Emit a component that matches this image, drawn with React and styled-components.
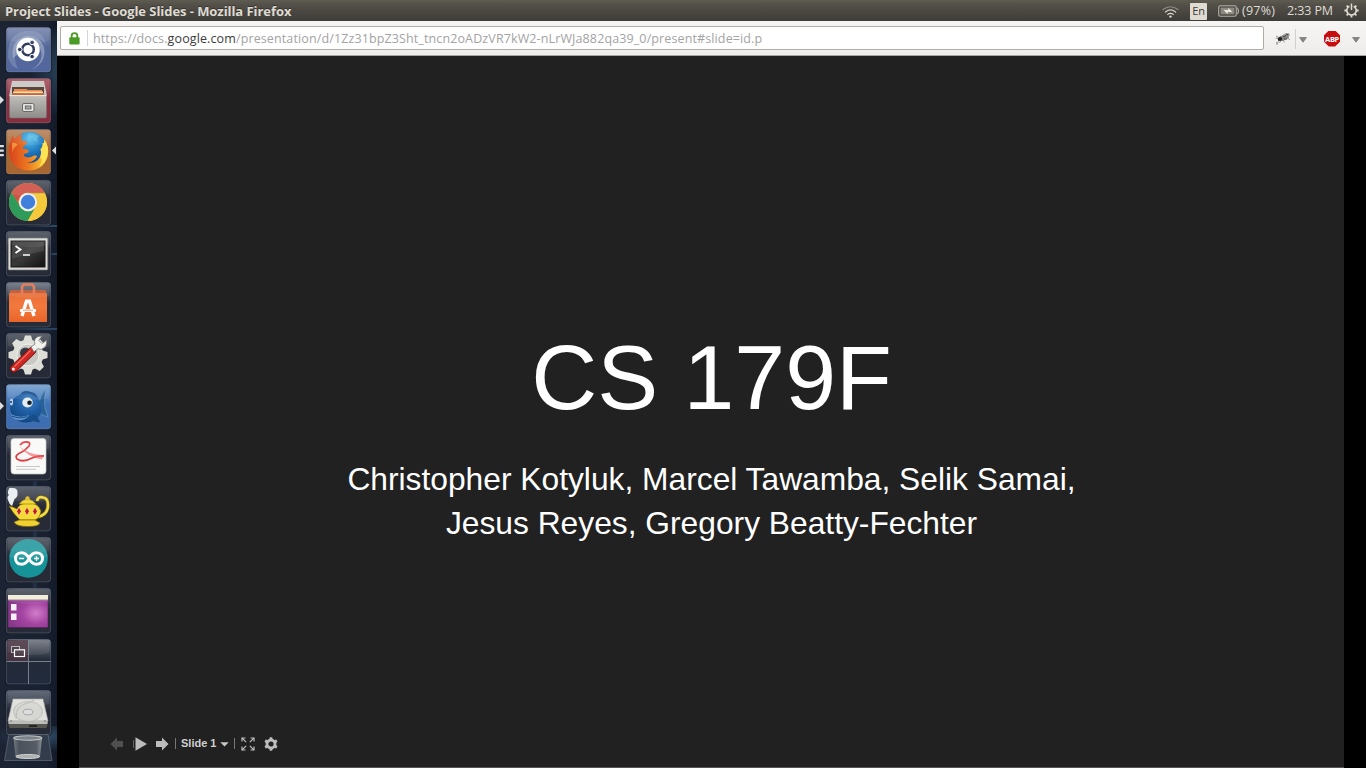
import React from "react";
import styled, { createGlobalStyle } from "styled-components";

const GlobalStyle = createGlobalStyle`
  html, body, #root { margin: 0; padding: 0; height: 100%; }
  body { background: #000; overflow: hidden; }
  * { box-sizing: border-box; }
`;

const ui = `"Open Sans", "Noto Sans", sans-serif`;

const Desktop = styled.div`
  width: 1366px;
  height: 768px;
  display: flex;
  flex-direction: column;
  font-family: ${ui};
`;

const TopPanel = styled.header`
  height: 21px;
  flex: none;
  display: flex;
  align-items: center;
  justify-content: space-between;
  padding: 0 7px 0 5px;
  background: linear-gradient(#5e5b51 0, #524f48 25%, #3e3c38 100%);
  color: #dfdbd2;
`;

const WindowTitle = styled.div`
  font-size: 13px;
  font-weight: 700;
  line-height: 20px;
  letter-spacing: -0.06px;
  white-space: nowrap;
  text-shadow: 0 -1px 0 rgba(0, 0, 0, 0.35);
`;

const Indicators = styled.div`
  display: flex;
  align-items: center;
  height: 21px;
`;

const Indicator = styled.div`
  display: flex;
  align-items: center;
  height: 20px;
  margin-left: ${(p) => p.$gap}px;
  font-size: 12.5px;
  line-height: 20px;
  letter-spacing: ${(p) => p.$track || 0}px;
  white-space: nowrap;
`;

const Keyboard = styled.div`
  width: 17px;
  height: 17px;
  margin: 1px 0 0 11px;
  border-radius: 1px;
  background: #dfdbd2;
  color: #3c3b37;
  font-size: 11px;
  line-height: 16px;
  text-align: center;
`;

const Workspace = styled.div`
  flex: 1;
  min-height: 0;
  display: flex;
`;

const Launcher = styled.nav`
  width: 57px;
  flex: none;
  display: flex;
  flex-direction: column;
  gap: 5px;
  padding-top: 6px;
  overflow: hidden;
  background:
    linear-gradient(90deg, transparent 32px, rgba(70, 120, 170, 0.22) 35px, transparent 38px) 0 460px / 57px 110px no-repeat,
    linear-gradient(90deg, transparent 40%, rgba(75, 135, 180, 0.45)) 0 204px / 57px 2px no-repeat,
    linear-gradient(90deg, transparent 40%, rgba(75, 135, 180, 0.4)) 0 232px / 57px 2px no-repeat,
    linear-gradient(90deg, transparent 10%, rgba(75, 135, 180, 0.4)) 0 307px / 57px 2px no-repeat,
    radial-gradient(ellipse at 56px 45px, rgba(70, 125, 160, 0.7), transparent 70%) 30px 5px / 27px 100px no-repeat,
    radial-gradient(ellipse at 50px 10px, rgba(75, 130, 170, 0.4), transparent 80%) 0 705px / 57px 24px no-repeat,
    linear-gradient(90deg, #1c2434 0, #192131 80%, #121a29 100%);
`;

const LauncherIcon = styled.svg`
  display: block;
  flex: none;
  width: 57px;
  height: ${(p) => p.$height || 46}px;
`;

const Browser = styled.main`
  flex: 1;
  display: flex;
  flex-direction: column;
`;

const Toolbar = styled.div`
  height: 35px;
  flex: none;
  display: flex;
  align-items: flex-start;
  padding: 5px 7px 0 3px;
  background: linear-gradient(#f7f5f3, #efedeb);
  border-bottom: 1px solid #a8a6a2;
`;

const AddressBar = styled.div`
  width: 1204px;
  height: 24px;
  display: flex;
  align-items: center;
  padding-left: 8px;
  border: 1px solid #b1ada5;
  border-radius: 2px;
  background: #fff;
`;

const Separator = styled.span`
  width: 1px;
  height: ${(p) => p.$h}px;
  margin: ${(p) => p.$m};
  background: ${(p) => p.$c};
`;

const Url = styled.div`
  padding-top: 1px;
  font-size: 12.5px;
  line-height: 22px;
  letter-spacing: 0.12px;
  color: #a3a3a3;
  white-space: nowrap;
`;

const Host = styled.span`
  color: #3c3c3c;
`;

const AddonButtons = styled.div`
  display: flex;
  align-items: center;
  height: 25px;
  margin-left: 11px;
`;

const Glyph = styled.svg`
  display: block;
  flex: none;
  width: ${(p) => p.$w}px;
  height: ${(p) => p.$h}px;
  margin: ${(p) => p.$m || 0};
`;

const Stage = styled.section`
  flex: 1;
  min-height: 0;
  display: flex;
  justify-content: center;
  padding-right: 1px;
  background: #000;
`;

const Slide = styled.article`
  width: 1265px;
  display: flex;
  flex-direction: column;
  align-items: center;
  background: #212121;
  border-bottom: 1px solid #595355;
  color: #fff;
  font-family: "Liberation Sans", Arial, sans-serif;
`;

const SlideTitle = styled.h1`
  margin: 268px 0 0;
  font-size: 91.4px;
  font-weight: 400;
  line-height: 106px;
`;

const Authors = styled.p`
  margin: 27px 0 0;
  font-size: 31.75px;
  line-height: 44px;
  text-align: center;
  white-space: nowrap;
`;

const SlideControls = styled.div`
  align-self: flex-start;
  display: flex;
  align-items: center;
  height: 24px;
  margin: auto 0 11px 31px;
`;

const SlideNumber = styled.span`
  font-size: 11px;
  font-weight: 700;
  line-height: 16px;
  color: #d0d0d0;
  margin: -2px 4px 0 5px;
`;

function Tile({ glow = "#535964", base = "#262b37", mid, children }) {
  const id = React.useId();
  return (
    <>
      <defs>
        <linearGradient id={id} x1="0" y1="0" x2="0" y2="1">
          <stop offset="0" stopColor={glow} />
          <stop offset=".45" stopColor={mid || base} />
          <stop offset="1" stopColor={base} />
        </linearGradient>
      </defs>
      <rect x="5" y="-.5" width="47" height="46.5" rx="4" fill="#080e19" opacity=".55" />
      <rect x="6.3" y=".4" width="44.4" height="44.6" rx="3" fill={`url(#${id})`} stroke="#a7b0bf" strokeOpacity=".32" strokeWidth=".9" />
      {children}
      <path d="M8 2 Q28 -1 49 2 V14 Q28 19 8 13Z" fill="#fff" opacity=".07" />
    </>
  );
}

const runningArrow = <path d="M0 18 L4 22 L0 26Z" fill="#dedede" />;

function Dash() {
  return (
    <LauncherIcon viewBox="0 0 57 46">
      <Tile glow="#7c89ae" mid="#536898" base="#5367a0">
        <path d="M8 30 Q7 6 26 4 Q43 2 46 18 Q42 11 32 10 Q18 10 15 25 Q14 34 18 42 Q10 39 8 30Z" fill="#9aa8c8" opacity=".4" />
        <path d="M13 31 Q10 14 26 9 Q40 8 44 20 Q47 36 31 43 Q44 35 41 24 Q38 13 28 13 Q16 15 17 28Z" fill="#c5cde0" opacity=".45" />
        <circle cx="28" cy="22.5" r="11.7" fill="#fff" />
        <circle cx="28" cy="22.5" r="5.8" fill="none" stroke="#303b5e" strokeWidth="2.5" />
        <g fill="#303b5e" stroke="#fff" strokeWidth="1">
          <circle cx="19.8" cy="22.5" r="2.3" />
          <circle cx="32.1" cy="15.4" r="2.3" />
          <circle cx="32.1" cy="29.6" r="2.3" />
        </g>
      </Tile>
    </LauncherIcon>
  );
}

function Files() {
  return (
    <LauncherIcon viewBox="0 0 57 46">
      <defs>
        <linearGradient id="cabinet" x1="0" y1="0" x2="0" y2="1">
          <stop offset="0" stopColor="#c1c0bc" /><stop offset="1" stopColor="#8d8c88" />
        </linearGradient>
      </defs>
      <Tile glow="#a85a66" mid="#8c2f40" base="#852e3e">
        <path d="M12 3 H44 L47 18 H9Z" fill="#c9c8c4" />
        <rect x="12" y="9" width="32" height="10" fill="#4d3930" />
        <path d="M14 11 H26 L28 12 H42 V17 H14Z" fill="#e8833e" />
        <path d="M13 13.6 H43 V15.4 H13Z" fill="#f8dfb8" />
        <path d="M12 15 H44 V18 H12Z" fill="#d96725" />
        <rect x="9.5" y="17" width="37" height="23" rx="1.5" fill="url(#cabinet)" stroke="#777" strokeWidth=".5" />
        <path d="M10 17.6 H46" stroke="#eee" />
        <rect x="22.5" y="25.5" width="11.5" height="8" rx="1.5" fill="#e4e4e2" stroke="#6b6a67" />
        <rect x="25.3" y="28" width="5.7" height="3" fill="#aaa" stroke="#555" strokeWidth=".8" />
      </Tile>
      {runningArrow}
    </LauncherIcon>
  );
}

function Firefox() {
  return (
    <LauncherIcon viewBox="0 0 57 46">
      <defs>
        <radialGradient id="globe" cx=".5" cy=".2" r=".8">
          <stop offset="0" stopColor="#58c0ec" /><stop offset=".5" stopColor="#1b75bd" /><stop offset="1" stopColor="#173776" />
        </radialGradient>
        <linearGradient id="fox" x1="0" y1="0" x2="1" y2="0">
          <stop offset="0" stopColor="#d8421c" /><stop offset=".5" stopColor="#ee7b21" /><stop offset="1" stopColor="#fcdb39" />
        </linearGradient>
      </defs>
      <Tile glow="#b88862" mid="#a9662f" base="#a86731">
        <circle cx="29.5" cy="20.5" r="17.8" fill="url(#globe)" />
        <path d="M28 5 Q33 3 39 7 Q36 9 38 13 Q34 12 31 9 Q27 10 28 5Z" fill="#73cbe8" opacity=".5" />
        <path d="M10.5 13 Q11 9 12.5 6 Q13 9.5 15.5 9.5 Q18 6 22.5 5.5 Q20.5 8 21.5 11.5 L27 12.5 Q27.5 15 23.5 17 L22.8 20 Q26 19 28.5 21.5 Q29.5 23.5 26 24.3 Q23 25 24 27 Q28 30 34 26.5 Q37 26 37 27.5 Q34 33 27 33.5 Q36 35 40 28 Q42 24 40.5 20 Q43 18 42.6 14 Q45 15 44 10 Q50 18 47.3 28 Q43.5 41 29 41.5 Q14 41 10 28 Q8 20 10.5 13Z" fill="url(#fox)" />
        <path d="M44 10 Q50 18 47.3 28 Q45 34 39 38 Q44 30 40 29 Q42 24 40.5 20 Q43 18 42.6 14 Q45 15 44 10Z" fill="#ffe95c" opacity=".8" />
        <path d="M12 14 Q15 13 18 16 Q13 18 12.5 24Z" fill="#f7a343" opacity=".8" />
      </Tile>
      <path d="M0 16 h3 q1 0 1 1.2 t-1 1.1 H0Z M0 20.5 h3 q1 0 1 1.2 t-1 1.1 H0Z M0 25 h3 q1 0 1 1.2 t-1 1.1 H0Z" fill="#dedede" />
      <path d="M56 17.5 L52 21.5 L56 25.5Z" fill="#dedede" />
    </LauncherIcon>
  );
}

function Chrome() {
  return (
    <LauncherIcon viewBox="0 0 57 46">
      <Tile>
        <circle cx="28" cy="22" r="19" fill="#e4b633" />
        <path d="M11.5 12.5 A19 19 0 0 1 44.8 13 H28 A9 9 0 0 0 19.8 26.5Z" fill="#cf5447" />
        <path d="M11.5 12.5 L20.2 26.5 A9 9 0 0 0 36 26.5 L27.7 41 A19 19 0 0 1 11.5 12.5Z" fill="#2f9b5b" />
        <path d="M28 13 H44.8 A19 19 0 0 1 27.7 41 L36 26.5 A9 9 0 0 0 28 13Z" fill="#f4c93c" />
        <circle cx="28" cy="22" r="9.2" fill="#f0f0ee" />
        <circle cx="28" cy="22" r="7.2" fill="#427edb" />
        <path d="M28 13 H44.8" stroke="#b78928" strokeWidth=".7" />
      </Tile>
    </LauncherIcon>
  );
}

function Terminal() {
  return (
    <LauncherIcon viewBox="0 0 57 46">
      <defs>
        <linearGradient id="screen" x1="0" y1="0" x2="1" y2="1">
          <stop offset="0" stopColor="#282828" /><stop offset=".5" stopColor="#383838" /><stop offset="1" stopColor="#111" />
        </linearGradient>
      </defs>
      <Tile>
        <rect x="8.2" y="7" width="39.6" height="32" rx="1" fill="#dadad7" stroke="#777" strokeWidth=".7" />
        <rect x="11" y="10" width="34" height="26" fill="url(#screen)" stroke="#161616" />
        <path d="M12 10.5 H44 V20 Q27 23 12 28Z" fill="#fff" opacity=".1" />
        <path d="M15.5 15 L20.5 18.5 L15.5 22" fill="none" stroke="#fff" strokeWidth="1.8" />
        <path d="M23 24 H30" stroke="#fff" strokeWidth="1.5" />
      </Tile>
    </LauncherIcon>
  );
}

function SoftwareCentre() {
  return (
    <LauncherIcon viewBox="0 0 57 46">
      <defs>
        <linearGradient id="bag" x1="0" y1="0" x2="0" y2="1">
          <stop offset="0" stopColor="#e36b35" /><stop offset=".5" stopColor="#f4793e" /><stop offset="1" stopColor="#e96429" />
        </linearGradient>
      </defs>
      <Tile glow="#737a86">
        <path d="M11 8 H45 L47 12 V40 H9 V12Z" fill="url(#bag)" />
        <path d="M11 8 H45 L46 11 H10Z" fill="#bd5835" />
        <path d="M22 13 V6 Q22 2.5 25 2.5 H31 Q34 2.5 34 6 V13" fill="none" stroke="#e17650" strokeWidth="2.5" />
        <path d="M22 34 L26.5 19.3 H29.5 L34 34" fill="none" stroke="#fff" strokeWidth="3.4" />
        <path d="M20 28.5 H36" stroke="#fff" strokeWidth="2.8" />
        <path d="M23 28.2 H33" stroke="#e4713e" strokeWidth=".7" />
      </Tile>
    </LauncherIcon>
  );
}

function Settings() {
  return (
    <LauncherIcon viewBox="0 0 57 46">
      <Tile>
        <g fill="#deded9">
          <circle cx="28" cy="22" r="15.3" />
          {[0, 45, 90, 135, 180, 225, 270, 315].map((a) => (
            <path key={a} transform={`rotate(${a} 28 22)`} d="M23 9 L25 2.5 H31 L33 9Z" />
          ))}
        </g>
        <circle cx="28" cy="22" r="11" fill="#c9c9c4" stroke="#efefeb" />
        <circle cx="25.5" cy="20" r="5.5" fill="#343843" />
        <path d="M14 35.5 L32 18" stroke="#730e0e" strokeWidth="8" strokeLinecap="round" />
        <path d="M14 35.5 L32 18" stroke="#ce2825" strokeWidth="6.2" strokeLinecap="round" />
        <path d="M14.5 33.5 L30.5 17.5" stroke="#ef6a5e" strokeWidth="1.3" />
        <circle cx="13.4" cy="36" r="1.5" fill="#f5eeee" />
        <path d="M31 14 L35 11 Q33 6 38 3.5 L42 3 L38.8 7.3 L42 10.5 L46.5 7.3 Q47.5 13.5 42 16 Q40 17 38 15.5 L34 19Z" fill="#f0f0eb" stroke="#6e706e" strokeWidth=".8" />
      </Tile>
    </LauncherIcon>
  );
}

function Bluefish() {
  return (
    <LauncherIcon viewBox="0 0 57 46">
      <defs>
        <radialGradient id="fish" cx=".6" cy=".25" r=".75">
          <stop offset="0" stopColor="#3f7dbf" /><stop offset=".55" stopColor="#1e5da3" /><stop offset="1" stopColor="#104780" />
        </radialGradient>
      </defs>
      <Tile glow="#79a3d0" mid="#3e72b7" base="#3e6caf">
        <path d="M38 22 Q40 12 45.5 5 Q44 17 45 23 Q46 28 48 33 Q42 32 38 27Z" fill="#2b6195" stroke="#69a3ca" strokeWidth=".6" />
        <path d="M20 11 Q23 5 31 8 Q37 9 38 15Z" fill="#1b4f8b" />
        <ellipse cx="26" cy="24" rx="15.8" ry="14.5" fill="url(#fish)" />
        <path d="M11 30 Q20 35 29 31 Q26 37 18 36 Q12 35 11 30Z" fill="#6496cf" />
        <path d="M12 32 Q20 35.5 27 32.5" stroke="#194c86" fill="none" />
        <ellipse cx="27.5" cy="18.5" rx="5.2" ry="5" fill="#e6edf1" />
        <circle cx="29.5" cy="18.8" r="2.3" fill="#15202a" />
        <ellipse cx="11.5" cy="18" rx="1.6" ry="3.6" fill="#b9d0e2" />
        <circle cx="11" cy="18" r="1" fill="#173557" />
        <path d="M33 30 Q38 33 40 38 Q34 39 29 35Z" fill="#184e87" />
      </Tile>
      {runningArrow}
    </LauncherIcon>
  );
}

function DocumentViewer() {
  return (
    <LauncherIcon viewBox="0 0 57 46">
      <Tile>
        <rect x="11" y="3.5" width="35" height="35.5" rx="3" fill="#f9f9f7" stroke="#c5c5c5" strokeWidth=".7" />
        <path d="M20 10 Q23 6.5 27 7 Q31 7.5 29 11 Q25 16 19 18.5 Q14.5 21 17 24 Q23 28 32 23 Q38 20.5 44 21" fill="none" stroke="#de3f45" strokeWidth="1.8" />
        <path d="M19 11 Q28 19.5 44 20.5 L42 24.5 Q29 23 19 11Z" fill="#ee5b5f" opacity=".6" />
        <path d="M16 31.5 H40 M16 34.3 H36" stroke="#c8c8c8" strokeWidth="1" />
      </Tile>
    </LauncherIcon>
  );
}

function Teapot() {
  return (
    <LauncherIcon viewBox="0 0 57 46">
      <Tile>
        <path d="M8.5 4 Q9 1 12.5 2 Q18 2 17.5 7 Q18 11 14.5 13 L12 20 Q9 18 8 14 Q6.5 11 9 9 Q7 7 8.5 4Z" fill="#e9eef3" />
        <path d="M37 15 Q38 10 43 11.5 Q48 12 48 19 Q48 29 37 31" fill="none" stroke="#665800" strokeWidth="4" />
        <path d="M37 15 Q38 10 43 11.5 Q48 12 48 19 Q48 29 37 31" fill="none" stroke="#f0d947" strokeWidth="2.7" />
        <path d="M9 20 Q14 21 17 23 Q19 18 25 17 H33 Q39 19 41 25 Q40 32 35 34 H20 Q17 31 13.5 27Z" fill="#f5d936" stroke="#74600a" strokeWidth=".7" />
        <path d="M19 18 Q23 13 28 13 Q33 14 36 18Z" fill="#f3d836" stroke="#8d7712" strokeWidth=".6" />
        <circle cx="27.5" cy="12.5" r="2.2" fill="#e1bd27" />
        <path d="M19 34 H35 L40 37 Q39 40.5 28 40.5 Q16 40.5 14 36Z" fill="#f0d030" stroke="#7b6710" strokeWidth=".7" />
        {[19, 27, 35].map((x) => <path key={x} d={`M${x} 21 l2.4 4.3 -2.4 4.3 -2.4 -4.3Z`} fill="#bc1e2a" stroke="#fff0a2" strokeWidth=".6" />)}
      </Tile>
    </LauncherIcon>
  );
}

function Arduino() {
  return (
    <LauncherIcon viewBox="0 0 57 46">
      <Tile>
        <circle cx="28.5" cy="21.5" r="19.3" fill="#159398" />
        <path d="M9.5 20 A19 18 0 0 1 47.5 20 Q28 25 9.5 20Z" fill="#47aaae" opacity=".5" />
        <path d="M29 21.5 C25.5 13.5 15.5 14.5 15.5 21.5 C15.5 28.5 25.5 29.5 29 21.5 C32.5 13.5 42.5 14.5 42.5 21.5 C42.5 28.5 32.5 29.5 29 21.5Z" fill="none" stroke="#fff" strokeWidth="3" />
        <path d="M19 21.5 H24 M34 21.5 H39 M36.5 19 V24" stroke="#fff" strokeWidth="1.3" />
      </Tile>
    </LauncherIcon>
  );
}

function PurpleWindow() {
  return (
    <LauncherIcon viewBox="0 0 57 46">
      <defs>
        <radialGradient id="violet" cx=".7" cy=".55" r=".7">
          <stop offset="0" stopColor="#d27dca" /><stop offset=".5" stopColor="#a444a1" /><stop offset="1" stopColor="#87388b" />
        </radialGradient>
      </defs>
      <Tile>
        <rect x="8" y="7.5" width="40" height="32" rx="1" fill="url(#violet)" stroke="#551e57" strokeWidth=".6" />
        <path d="M8 7 H48 V12 H8Z" fill="#f0ecda" />
        <path d="M8 11.8 H48" stroke="#aaa093" />
        <rect x="11" y="16" width="5.5" height="6.5" fill="#f7eff6" />
        <rect x="11" y="25.5" width="5.5" height="6.5" fill="#f7eff6" />
      </Tile>
    </LauncherIcon>
  );
}

function Workspaces() {
  return (
    <LauncherIcon viewBox="0 0 57 46">
      <Tile glow="#767b86" mid="#242b39" base="#222b3d">
        <path d="M7 1 H28 V22 H7Z" fill="#4c3543" opacity=".85" />
        <path d="M28.5 1 V45 M6.5 22.5 H51" stroke="#777f8c" />
        <rect x="11.5" y="7.5" width="8" height="6" fill="#3d3540" stroke="#b9b5b8" />
        <rect x="14.5" y="10.8" width="10" height="6.7" fill="#493b46" stroke="#fff" strokeWidth="1.2" />
      </Tile>
    </LauncherIcon>
  );
}

function Disk() {
  return (
    <LauncherIcon viewBox="0 0 57 46">
      <Tile glow="#596170">
        <path d="M13 10 H43 L48 32 L46.5 38 H9.5 L8 32Z" fill="#555650" />
        <path d="M13 9 H43 L48 31 H8Z" fill="#dfdfdc" stroke="#aaa" strokeWidth=".6" />
        <path d="M8.5 30.5 H47.5 V34 H8.5Z" fill="#bcbcb8" />
        <ellipse cx="28" cy="21.5" rx="14.5" ry="10" fill="#d6d6d3" stroke="#b0b0ad" strokeWidth=".7" />
        <ellipse cx="28" cy="22" rx="4.8" ry="2.8" fill="#dedede" stroke="#999" strokeWidth=".8" />
        <path d="M16 29 Q15 15 28 13 L34 10" stroke="#b8b8b5" fill="none" />
        <path d="M12 11 h1 M43 11 h1 M10 31 h2 M44 31 h2" stroke="#777" />
        <path d="M29 36 H37" stroke="#111" strokeWidth="1.4" />
      </Tile>
    </LauncherIcon>
  );
}

const TrashSlot = styled.div`
  margin-top: -7px;
`;

function Trash() {
  return (
    <TrashSlot>
      <LauncherIcon $height={34} viewBox="0 0 57 34">
        <defs>
          <linearGradient id="bin" x1="0" y1="0" x2="1" y2="0">
            <stop offset="0" stopColor="#727981" /><stop offset=".2" stopColor="#4b525c" /><stop offset=".8" stopColor="#555c65" /><stop offset="1" stopColor="#8a9096" />
          </linearGradient>
        </defs>
        <path d="M9 .5 H48 L52 26.5 H4.5Z" fill="#323c4b" stroke="#7a8491" strokeOpacity=".5" />
        <path d="M13.5 4 H42 L40 22.5 Q28 26 15.5 22.5Z" fill="url(#bin)" />
        <ellipse cx="27.8" cy="4" rx="14" ry="2.2" fill="#7a828a" stroke="#bfc2c2" strokeWidth="1.1" />
        <ellipse cx="27.8" cy="22.5" rx="12" ry="2" fill="#abb1b0" stroke="#d2d4d1" />
      </LauncherIcon>
    </TrashSlot>
  );
}

function PanelIndicators() {
  return (
    <Indicators>
      <Glyph $w={17} $h={14} $m="2px 0 0" viewBox="0 0 17 14" fill="none" strokeLinecap="round">
        <path d="M1 4.5 Q8.5 -1 16 4.5" stroke="#8f8c84" strokeWidth="1.2" />
        <path d="M3.4 7 Q8.5 2.8 13.6 7" stroke="#cfcbc2" strokeWidth="1.2" />
        <path d="M5.7 9.4 Q8.5 7.2 11.3 9.4" stroke="#dfdbd2" strokeWidth="1.2" />
        <circle cx="8.5" cy="11.6" r="1.2" fill="#dfdbd2" />
      </Glyph>
      <Keyboard>En</Keyboard>
      <Indicator $gap={11} $track={0.2}>
        <Glyph $w={21} $h={12} $m="0 3px 0 0" viewBox="0 0 21 12">
          <rect x=".7" y=".7" width="17.6" height="10.6" rx="1.7" fill="none" stroke="#b5b1a9" strokeWidth="1.1" />
          <rect x="2.6" y="2.6" width="13.8" height="6.8" fill="#8c8981" />
          <path d="M19.2 3 Q20.4 3 20.4 6 Q20.4 9 19.2 9" stroke="#c8c4bc" fill="none" />
          <path d="M5.5 4.8 L10 5.2 L10.5 3 L14.5 7.2 L10 6.8 L9.5 9Z" fill="#f0ede6" />
        </Glyph>
        (97%)
      </Indicator>
      <Indicator $gap={12} $track={-0.12}>2:33 PM</Indicator>
      <Indicator $gap={11}>
        <Glyph $w={15} $h={15} viewBox="0 0 15 15" stroke="#dfdbd2" fill="none">
          <path d="M5.4 3.2 A4.7 4.7 0 1 0 9.6 3.2" strokeWidth="1.6" />
          <path d="M7.5 .5 V7" strokeWidth="1.5" />
          <path d="M2.6 2.6 L4.2 4.2 M12.4 2.6 L10.8 4.2 M.4 7.5 H2.7 M12.3 7.5 H14.6 M2.6 12.4 L4.2 10.8 M12.4 12.4 L10.8 10.8 M7.5 12.3 V14.6" strokeWidth="1.8" />
        </Glyph>
      </Indicator>
    </Indicators>
  );
}

const Caret = ({ m }) => (
  <Glyph $w={8} $h={6} $m={m} viewBox="0 0 8 6"><path d="M.5 .5 H7.5 L4 5.2Z" fill="#868583" stroke="#73726f" strokeWidth=".7" /></Glyph>
);

const StopSign = styled.div`
  width: 16px;
  height: 16px;
  margin-left: 17px;
  display: flex;
  align-items: center;
  justify-content: center;
  background: #c70d0e;
  clip-path: polygon(30% 0, 70% 0, 100% 30%, 100% 70%, 70% 100%, 30% 100%, 0 70%, 0 30%);
  color: #fff;
  font: 700 7.5px/16px ${ui};
  letter-spacing: -0.35px;
`;

function BrowserToolbar() {
  return (
    <Toolbar>
      <AddressBar>
        <Glyph $w={11} $h={13} viewBox="0 0 11 13">
          <path d="M2.7 6 V3.6 Q2.7 1.1 5.5 1.1 Q8.3 1.1 8.3 3.6 V6" fill="none" stroke="#4a9b24" strokeWidth="1.8" />
          <rect x=".3" y="5.3" width="10.3" height="7.2" rx="1" fill="#4a9b24" />
        </Glyph>
        <Separator $h={16} $m="0 5px 0 7px" $c="#d5d5d5" />
        <Url>
          https://docs.<Host>google.com</Host>/presentation/d/1Zz31bpZ3Sht_tncn2oADzVR7kW2-nLrWJa882qa39_0/present#slide=id.p
        </Url>
      </AddressBar>
      <AddonButtons>
        <Glyph $w={16} $h={14} $m="1px 0 0" viewBox="0 0 16 14">
          <path d="M6 5 Q9 .5 14 1.7 Q15.5 5 9 7Z" fill="#bbb" stroke="#888" strokeWidth=".6" />
          <path d="M5 4 L13 3 L14 6 L8 9 L3 9Z" fill="#8a8a8a" />
          <ellipse cx="5" cy="7" rx="2.3" ry="1.9" fill="#222" />
          <path d="M8 5 L11 3.5 M9 7 L12 7 M11 2 L13.5 3" stroke="#444" strokeWidth="1.1" />
          <path d="M1 4 L4 5.5 M.5 6.2 H3 M3.5 9 L2 12.5 L1.5 10 M6 8.5 L4.5 11 M8 8 L9.5 10.5 M12 6 L15 7.8" stroke="#888" fill="none" strokeWidth=".8" />
        </Glyph>
        <Separator $h={20} $m="0 3px 0 4px" $c="#d1cfcc" />
        <Caret m="3px 0 0" />
        <StopSign>ABP</StopSign>
        <Caret m="3px 0 0 12px" />
      </AddonButtons>
    </Toolbar>
  );
}

function Controls() {
  return (
    <SlideControls>
      <Glyph $w={14} $h={14} viewBox="0 0 14 14"><path d="M7 .5 V4 H13 V10 H7 V13.5 L.5 7Z" fill="#4f4f4f" /></Glyph>
      <Glyph $w={15} $h={14} $m="0 0 0 9px" viewBox="0 0 15 14">
        <path d="M.6 3 V11" stroke="#696969" /><path d="M2.5 .3 L14 7 L2.5 13.7Z" fill="#bdbdbd" />
      </Glyph>
      <Glyph $w={14} $h={14} $m="0 0 0 7px" viewBox="0 0 14 14"><path d="M7 .5 V4 H1 V10 H7 V13.5 L13.5 7Z" fill="#bdbdbd" /></Glyph>
      <Separator $h={11} $m="-2px 0 0 6px" $c="#777" />
      <SlideNumber>Slide 1</SlideNumber>
      <Glyph $w={9} $h={5} viewBox="0 0 9 5"><path d="M.3 .2 H8.7 L4.5 4.6Z" fill="#c7c7c7" /></Glyph>
      <Separator $h={11} $m="-2px 0 0 5px" $c="#777" />
      <Glyph $w={14} $h={14} $m="0 0 0 6px" viewBox="0 0 14 14" stroke="#bdbdbd" fill="none">
        <path d="M1 4.5 V1 H4.5 M9.5 1 H13 V4.5 M13 9.5 V13 H9.5 M4.5 13 H1 V9.5" strokeWidth="1.2" />
        <path d="M1 1 L5.2 5.2 M13 1 L8.8 5.2 M13 13 L8.8 8.8 M1 13 L5.2 8.8" strokeWidth="1.1" />
      </Glyph>
      <Glyph $w={14} $h={14} $m="0 0 0 9px" viewBox="0 0 14 14">
        <circle cx="7" cy="7" r="4" fill="none" stroke="#bdbdbd" strokeWidth="2.8" />
        {[0, 60, 120, 180, 240, 300].map((a) => (
          <path key={a} transform={`rotate(${a} 7 7)`} d="M5.3 2.5 L5.8 .2 H8.2 L8.7 2.5Z" fill="#bdbdbd" />
        ))}
      </Glyph>
    </SlideControls>
  );
}

export default function App() {
  return (
    <Desktop>
      <GlobalStyle />
      <TopPanel>
        <WindowTitle>Project Slides - Google Slides - Mozilla Firefox</WindowTitle>
        <PanelIndicators />
      </TopPanel>
      <Workspace>
        <Launcher>
          <Dash />
          <Files />
          <Firefox />
          <Chrome />
          <Terminal />
          <SoftwareCentre />
          <Settings />
          <Bluefish />
          <DocumentViewer />
          <Teapot />
          <Arduino />
          <PurpleWindow />
          <Workspaces />
          <Disk />
          <Trash />
        </Launcher>
        <Browser>
          <BrowserToolbar />
          <Stage>
            <Slide>
              <SlideTitle>CS 179F</SlideTitle>
              <Authors>
                Christopher Kotyluk, Marcel Tawamba, Selik Samai,
                <br />
                Jesus Reyes, Gregory Beatty-Fechter
              </Authors>
              <Controls />
            </Slide>
          </Stage>
        </Browser>
      </Workspace>
    </Desktop>
  );
}
